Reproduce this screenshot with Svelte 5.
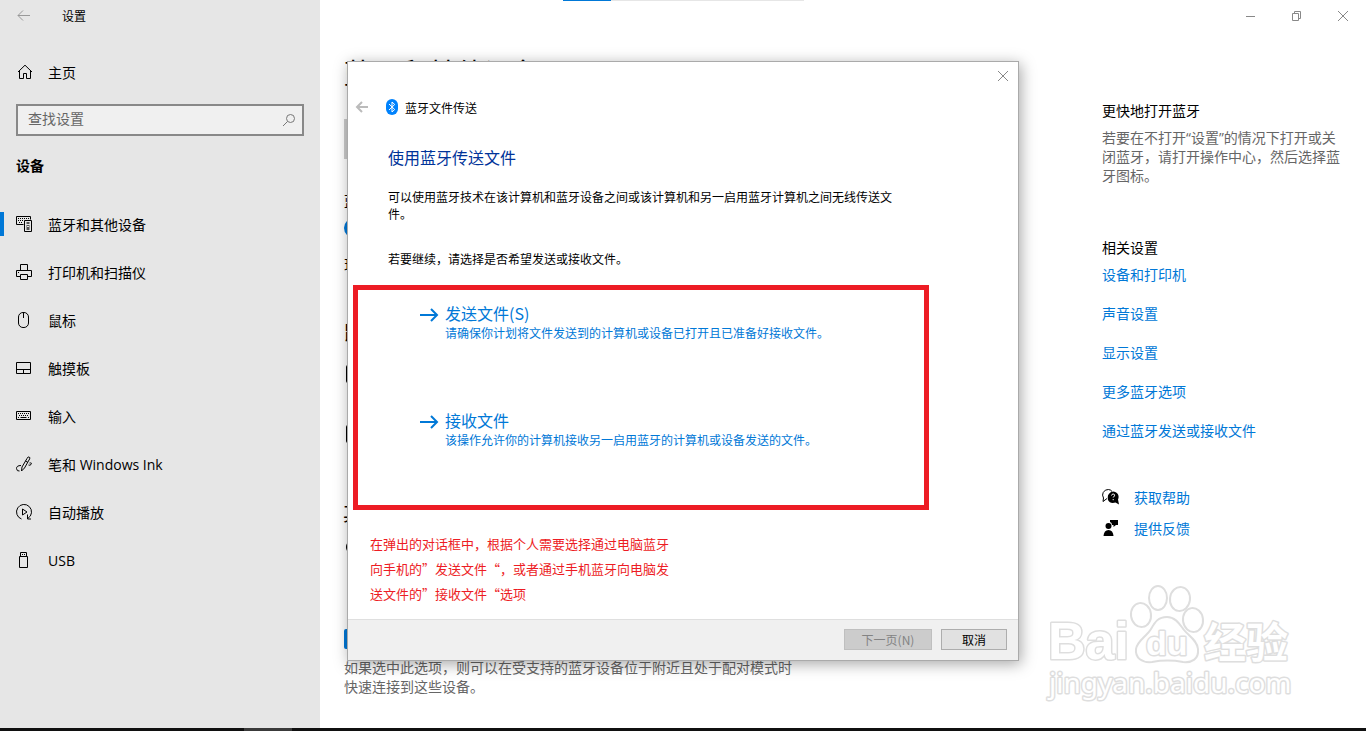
<script lang="ts">
  type NavItem = { icon: string; label: string };

  const navItems: NavItem[] = [
    { icon: 'devices', label: '蓝牙和其他设备' },
    { icon: 'printer', label: '打印机和扫描仪' },
    { icon: 'mouse', label: '鼠标' },
    { icon: 'touchpad', label: '触摸板' },
    { icon: 'keyboard', label: '输入' },
    { icon: 'pen', label: '笔和 Windows Ink' },
    { icon: 'autoplay', label: '自动播放' },
    { icon: 'usb', label: 'USB' }
  ];

  const relatedLinks = ['设备和打印机', '声音设置', '显示设置', '更多蓝牙选项', '通过蓝牙发送或接收文件'];

  const transferOptions = [
    { title: '发送文件(S)', hint: '请确保你计划将文件发送到的计算机或设备已打开且已准备好接收文件。' },
    { title: '接收文件', hint: '该操作允许你的计算机接收另一启用蓝牙的计算机或设备发送的文件。' }
  ];

  const noteLines = [
    '在弹出的对话框中，根据个人需要选择通过电脑蓝牙',
    '向手机的”发送文件“，或者通过手机蓝牙向电脑发',
    '送文件的”接收文件“选项'
  ];

  let selected = $state('devices');
  let query = $state('');
</script>

{#snippet navIcon(name: string)}
  <svg class="icon" viewBox="0 0 16 16" aria-hidden="true">
    {#if name === 'home'}
      <path d="M2 8 9 1.2 16 8M3.500 6.500V14.500H7.500V9.500H10.500V14.500H14.500V6.500" />
    {:else if name === 'devices'}
      <path d="M7.500 8.500H.5V.5H14.500V3.500M8.500 4.500H15.500V15.500H8.500Z" />
      <path d="M2 2.500H13M2 4.500H7M3 6.500H7" stroke-dasharray="1 1" />
      <path d="M12 6V8M12 9V14" stroke-width="3" stroke="#555" />
      <path d="M11 10.500H13M11 8.500H13" stroke="#e6e6e6" />
    {:else if name === 'printer'}
      <path d="M4.500 6.500V.5H11.500V6.500M4.500 12.500H.5V6.500H15.500V12.500H11.500M4.500 10.500H11.500V15.500H4.500ZM2 8.500H3" />
    {:else if name === 'mouse'}
      <rect x="2.500" y=".5" width="10" height="15" rx="4.500" />
      <path d="M7.500 1V6" />
    {:else if name === 'touchpad'}
      <path d="M.5 2.500H14.500V13.500H.5ZM.5 9.500H14.500M7.500 9.500V13.500" />
    {:else if name === 'keyboard'}
      <path d="M.5 3.500H14.500V11.500H.5Z" />
      <path d="M2 5.500H13M3 7.500H13" stroke-dasharray="1 1" />
      <path d="M2 9.500H3M4.500 9.500H10.500M12 9.500H13" />
    {:else if name === 'pen'}
      <path d="M5.500 15 6 11 11 2.500Q12-.2 13.800 1.500 14 3 13 4L8.500 12 5.500 15M9.500 5 12 6.500M5 9.500Q.5 9.500.5 12.500.8 15.500 3.500 15M13.500 7Q16.500 6.500 15 8.500 14 9.700 12.500 9" />
    {:else if name === 'autoplay'}
      <path d="M5.500 15A7.500 7.500 0 1 1 12 14.300M11.500 10.500V15H15M6.500 5 11 8 6.500 11Z" />
    {:else if name === 'usb'}
      <path d="M4.500 4.500V.5H10.500V4.500M3.500 4.500H11.500V15.500H3.500ZM6 2.500H7M8 2.500H9" />
    {/if}
  </svg>
{/snippet}

{#snippet closeIcon()}
  <svg width="12" height="12" viewBox="0 0 12 12" aria-hidden="true">
    <path d="M1 1 11 11M11 1 1 11" />
  </svg>
{/snippet}

<div class="desktop">
  <div class="window">
    <aside class="sidebar">
      <header class="titlebar">
        <button class="back" aria-label="后退">
          <svg width="14" height="12" viewBox="0 0 14 12" aria-hidden="true">
            <path d="M1 5.500H13M6 .5 1 5.500 6 10.500" />
          </svg>
        </button>
        <span>设置</span>
      </header>

      <a class="nav-link home" href="#home">{@render navIcon('home')}主页</a>

      <label class="search">
        <input type="text" placeholder="查找设置" aria-label="查找设置" bind:value={query} />
        <svg width="14" height="14" viewBox="0 0 14 14" aria-hidden="true">
          <circle cx="8.500" cy="5.500" r="4" />
          <path d="M5.500 8.500 1 13" />
        </svg>
      </label>

      <h2>设备</h2>

      <nav>
        {#each navItems as item}
          <a
            class="nav-link"
            class:active={selected === item.icon}
            href={`#${item.icon}`}
            onclick={() => (selected = item.icon)}
          >
            {@render navIcon(item.icon)}{item.label}
          </a>
        {/each}
      </nav>
    </aside>

    <main>
      <h1>蓝牙和其他设备</h1>
      <div class="add-button"></div>
      <p>蓝牙</p>
      <div class="toggle"></div>
      <p class="discover">现在</p>

      <h3>鼠标</h3>
      <div class="device"><i></i></div>
      <div class="device"><i></i></div>

      <h3 class="others">其他</h3>
      <div class="device short"><i class="round"></i></div>

      <input class="quick-pair" type="checkbox" checked aria-label="快速配对" />
      <p class="help">如果选中此选项，则可以在受支持的蓝牙设备位于附近且处于配对模式时快速连接到这些设备。</p>
    </main>

    <aside class="related">
      <div class="controls">
        <button aria-label="最小化">
          <svg width="12" height="12" viewBox="0 0 12 12" aria-hidden="true"><path d="M1 6.500H10" /></svg>
        </button>
        <button aria-label="还原">
          <svg width="12" height="12" viewBox="0 0 12 12" aria-hidden="true">
            <path d="M1.500 3.500H7.500V10.500H1.500ZM3.500 3.500V1.500H9.500V8.500H7.500" />
          </svg>
        </button>
        <button aria-label="关闭">{@render closeIcon()}</button>
      </div>

      <section>
        <h4>更快地打开蓝牙</h4>
        <p>若要在不打开“设置”的情况下打开或关闭蓝牙，请打开操作中心，然后选择蓝牙图标。</p>
      </section>

      <section class="links">
        <h4>相关设置</h4>
        {#each relatedLinks as link}
          <a href="#related">{link}</a>
        {/each}
      </section>

      <section class="support">
        <a href="#help">
          <svg width="18" height="18" viewBox="0 0 18 18" aria-hidden="true">
            <path d="M5 10.500 1 13.500 1.500 10Q-.2 7 1.200 4.500 3 1.200 6.500 1.500 9 1.800 10 3.500" fill="none" stroke="#000" />
            <path d="M11 3.500A5.500 5.500 0 0 1 16 11.500L17 16.500 13.500 14.500Q8 16 6 12 4.500 5 11 3.500Z" />
            <path d="M9.500 7.500Q9.800 6 11.200 6 13 6.200 12.500 7.800L11.200 9.500M11.200 11V12.200" fill="none" stroke="#fff" />
          </svg>
          获取帮助
        </a>
        <a href="#feedback">
          <svg width="18" height="18" viewBox="0 0 18 18" aria-hidden="true">
            <path d="M8 1H16V6H14L11.500 8V6H10Q10 3.500 8 3Z" />
            <circle cx="6.500" cy="7" r="3" />
            <path d="M1.500 17Q2 11 6.500 11T11.500 17Z" />
          </svg>
          提供反馈
        </a>
      </section>
    </aside>
  </div>

  <div class="taskbar"><span></span></div>

  <div class="progress"><span></span></div>

  <div class="dialog" role="dialog" aria-labelledby="dialog-title">
    <button class="dialog-close" aria-label="关闭">{@render closeIcon()}</button>

    <header>
      <button class="dialog-back" aria-label="后退">
        <svg width="14" height="12" viewBox="0 0 14 12" aria-hidden="true">
          <path d="M2 6H13M7 1 2 6 7 11" />
        </svg>
      </button>
      <svg class="bluetooth" width="12" height="16" viewBox="0 0 12 16" aria-hidden="true">
        <rect width="12" height="16" rx="6" fill="#0082fc" />
        <path d="M3 5 8.700 10.500 6 13V3L8.700 5.500 3 11" fill="none" stroke="#fff" />
      </svg>
      <span>蓝牙文件传送</span>
    </header>

    <div class="intro">
      <h2 id="dialog-title">使用蓝牙传送文件</h2>
      <p>可以使用蓝牙技术在该计算机和蓝牙设备之间或该计算机和另一启用蓝牙计算机之间无线传送文件。</p>
      <p>若要继续，请选择是否希望发送或接收文件。</p>
    </div>

    <div class="options">
      {#each transferOptions as option}
        <button>
          <svg width="20" height="16" viewBox="0 0 20 16" aria-hidden="true">
            <path d="M1 8H18M12 2 18 8 12 14" />
          </svg>
          <span>
            <strong>{option.title}</strong>
            <small>{option.hint}</small>
          </span>
        </button>
      {/each}
    </div>

    <p class="note">
      {#each noteLines as line}
        <span>{line}</span>
      {/each}
    </p>

    <footer>
      <button class="next" disabled>下一页(N)</button>
      <button class="cancel">取消</button>
    </footer>
  </div>

  <svg class="watermark" width="252" height="126" viewBox="0 0 252 126" role="img" aria-label="Baidu 经验">
    <text class="latin" x="4" y="79" font-size="52">Bai</text>
    <g>
      <ellipse cx="97" cy="35" rx="10" ry="12" transform="rotate(-8 97 35)" />
      <ellipse cx="114" cy="18" rx="9" ry="12" />
      <ellipse cx="136" cy="19" rx="10" ry="12" transform="rotate(8 136 19)" />
      <ellipse cx="149" cy="40" rx="10" ry="12" transform="rotate(-8 149 40)" />
      <path d="M123 37C132 37 136 45 140 50 145 56 153 60 154 69 155 79 148 83 139 82 128 80 119 80 108 82 98 83 91 78 92 69 93 61 103 56 107 49 111 42 114 37 123 37Z" />
    </g>
    <text class="latin" x="102" y="75" font-size="34">du</text>
    <text class="cjk" x="160" y="78" font-size="42">经验</text>
    <text class="url" x="5" y="113" font-size="28">jingyan.baidu.com</text>
  </svg>
</div>

<style>
  :global(body) {
    margin: 0;
    background: #fff;
  }

  .desktop {
    position: relative;
    display: flex;
    flex-direction: column;
    min-height: 100vh;
    color: #000;
    font: 14px/20px 'Noto Sans CJK SC', sans-serif;
  }

  h1,
  h2,
  h3,
  h4,
  p {
    margin: 0;
    font-weight: 400;
  }

  button {
    padding: 0;
    border: 0;
    background: none;
    color: inherit;
    font: inherit;
  }

  a {
    color: #0078d7;
    text-decoration: none;
  }

  svg {
    display: block;
    flex: none;
  }

  .window {
    flex: 1;
    display: grid;
    grid-template-columns: 320px 1fr 264px;
  }

  .sidebar {
    background: #e6e6e6;
  }

  .titlebar {
    display: flex;
    align-items: center;
    height: 32px;
    font-size: 12px;
  }

  .back {
    display: grid;
    place-items: center;
    width: 48px;
    height: 32px;
    margin-right: 14px;
  }

  .back svg,
  .dialog-back svg {
    fill: none;
    stroke: #999;
  }

  .nav-link {
    display: flex;
    align-items: center;
    gap: 16px;
    height: 48px;
    padding-left: 16px;
    color: #000;
    font-family: 'Open Sans', 'Noto Sans CJK SC', sans-serif;
  }

  .nav-link.home {
    margin-top: 17px;
  }

  .nav-link.active {
    background: linear-gradient(#0078d7, #0078d7) 0 11px / 4px 24px no-repeat;
  }

  .icon {
    width: 16px;
    height: 16px;
    margin-bottom: 2px;
    fill: none;
    stroke: #000;
  }

  .search {
    display: flex;
    align-items: center;
    height: 28px;
    margin: 7px 16px 19px;
    padding: 0 6px 0 10px;
    border: 2px solid #888;
    background: #f0f0f0;
  }

  .search input {
    flex: 1;
    min-width: 0;
    padding: 0 0 4px;
    border: 0;
    outline: 0;
    background: none;
    font: inherit;
  }

  .search input::placeholder {
    color: #666;
  }

  .search svg {
    fill: none;
    stroke: #777;
  }

  .sidebar h2 {
    margin: 0 16px 26px;
    font-size: 14px;
    font-weight: 700;
  }

  main {
    padding: 54px 24px 32px;
  }

  h1 {
    margin-bottom: 29px;
    font-size: 28px;
    line-height: 36px;
  }

  .add-button {
    width: 40px;
    height: 40px;
    margin-bottom: 31px;
    background: #ccc;
  }

  .toggle {
    width: 44px;
    height: 20px;
    margin: 8px 0 16px;
    border-radius: 10px;
    background: #0078d7;
  }

  .discover {
    margin-bottom: 46px;
  }

  h3 {
    font-size: 20px;
    line-height: 24px;
    text-indent: -1px;
  }

  h3.others {
    margin-top: 37px;
  }

  .device {
    display: flex;
    align-items: center;
    height: 60px;
    padding-left: 2px;
  }

  .device.short {
    height: 44px;
  }

  .device i {
    width: 18px;
    height: 14px;
    border: 2px solid #000;
    border-radius: 2px;
  }

  .device .round {
    border-radius: 50%;
  }

  .quick-pair {
    display: block;
    width: 20px;
    height: 20px;
    margin: 60px 0 9px;
    accent-color: #0078d7;
  }

  .help,
  .related p {
    max-width: 456px;
    color: #666;
    line-height: 19px;
  }

  .related p {
    font-family: 'Open Sans', 'Noto Sans CJK SC', sans-serif;
  }

  .controls {
    display: flex;
    justify-content: flex-end;
    height: 32px;
    margin-bottom: 68px;
  }

  .controls button {
    display: grid;
    place-items: center;
    width: 46px;
  }

  .controls svg,
  .dialog-close svg {
    fill: none;
    stroke: #888;
  }

  .related section {
    margin-right: 22px;
  }

  .related h4 {
    margin-bottom: 8px;
    font-size: 14px;
  }

  .links {
    display: flex;
    flex-direction: column;
    gap: 19px;
    padding: 52px 0 47px;
  }

  .related .links h4 {
    margin-bottom: -12px;
  }

  .support {
    display: grid;
    gap: 11px;
  }

  .support a {
    display: flex;
    align-items: center;
    gap: 14px;
  }

  .taskbar {
    height: 3px;
    background: #101010;
  }

  .taskbar span {
    display: block;
    width: 48px;
    height: 3px;
    margin-left: 244px;
    background: #3a3a3a;
  }

  .progress {
    position: absolute;
    top: 0;
    left: 0;
    right: 0;
    width: 241px;
    margin: 0 auto;
    background: #e6e6e6;
  }

  .progress span {
    display: block;
    width: 48px;
    height: 1px;
    background: #0078d7;
  }

  .dialog {
    position: absolute;
    top: 61px;
    left: 0;
    right: 0;
    width: 670px;
    margin: 0 auto;
    border: 1px solid #aaa;
    background: #fff;
    box-shadow: 2px 3px 14px rgba(0, 0, 0, 0.35);
    font-size: 12px;
    line-height: 17px;
  }

  .dialog-close {
    display: grid;
    place-items: center;
    width: 30px;
    height: 28px;
    margin-left: auto;
  }

  .dialog header {
    display: flex;
    align-items: center;
    height: 34px;
    padding-left: 7px;
  }

  .dialog-back {
    margin-right: 17px;
  }

  .dialog-back svg {
    stroke: #bbb;
    stroke-width: 2;
  }

  .bluetooth {
    margin-right: 7px;
  }

  .intro {
    padding: 21px 125px 0 40px;
  }

  .intro h2 {
    margin-bottom: 19px;
    color: #039;
    font-size: 16px;
    line-height: 24px;
  }

  .intro p {
    margin-bottom: 28px;
  }

  .intro p:last-child {
    margin-bottom: 18px;
  }

  .options {
    display: grid;
    gap: 68px;
    margin: 0 89px 21px 5px;
    padding: 12px 60px 57px 61px;
    border: 5px solid #ed1c24;
  }

  .options button {
    display: flex;
    gap: 6px;
    color: #0078d7;
    text-align: left;
  }

  .options svg {
    margin-top: 5px;
    fill: none;
    stroke: #0078d7;
    stroke-width: 2;
  }

  .options strong,
  .options small {
    display: block;
    font-size: 12px;
    font-weight: 400;
    line-height: 17px;
  }

  .options strong {
    font-size: 16px;
    line-height: 22px;
  }

  .note {
    margin: 0 22px 13px;
    color: #ed1c24;
    font-size: 13px;
    line-height: 25px;
  }

  .note span {
    display: block;
  }

  footer {
    display: flex;
    justify-content: flex-end;
    gap: 9px;
    padding: 9px 11px 10px;
    border-top: 1px solid #dfdfdf;
    background: #f0f0f0;
  }

  footer button {
    height: 21px;
    border: 1px solid #adadad;
    background: #e1e1e1;
  }

  .next {
    width: 88px;
    border-color: #bfbfbf;
    background: #ccc;
    color: #838383;
  }

  .cancel {
    width: 66px;
  }

  .watermark {
    position: absolute;
    right: 70px;
    bottom: 25px;
    fill: #fff;
    stroke: #dedede;
    stroke-width: 2;
  }

  .watermark text {
    paint-order: stroke;
    stroke-width: 3;
    stroke-linejoin: round;
  }

  .latin {
    font-family: 'Liberation Sans', sans-serif;
    font-weight: 700;
  }

  .cjk {
    font-family: 'Noto Sans CJK SC', sans-serif;
    font-weight: 700;
  }

  .url {
    font-family: 'Noto Sans', sans-serif;
  }
</style>
